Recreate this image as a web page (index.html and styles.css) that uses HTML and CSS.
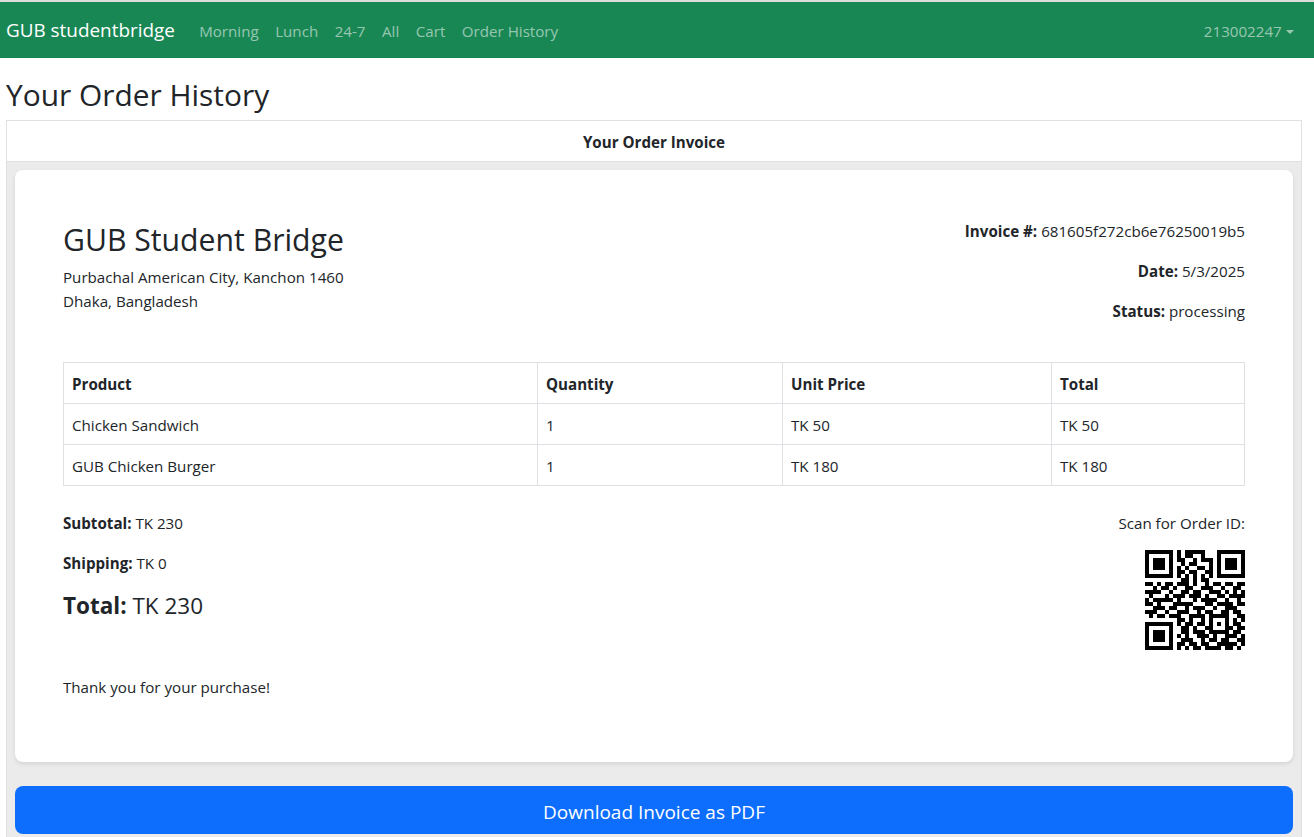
FILE: index.html
```html
<!DOCTYPE html>
<html>
    <head>
        <meta charset="utf-8">
        <title>Your Order History</title>
        <link rel="stylesheet" href="styles.css">
    </head>
    <body>
        <nav class="navbar">
            <a class="brand" href="#">GUB studentbridge</a>
            <a class="nav-link" href="#">Morning</a>
            <a class="nav-link" href="#">Lunch</a>
            <a class="nav-link" href="#">24-7</a>
            <a class="nav-link" href="#">All</a>
            <a class="nav-link" href="#">Cart</a>
            <a class="nav-link" href="#">Order History</a>
            <a class="nav-link user" href="#">213002247<span class="caret"></span></a>
        </nav>
        <main class="page">
            <h2 class="page-title">Your Order History</h2>
            <section class="card">
                <div class="card-header">Your Order Invoice</div>
                <div class="card-body">
                    <div class="invoice">
                        <div class="invoice-top">
                            <div>
                                <h1 class="shop-name">GUB Student Bridge</h1>
                                <p class="address">Purbachal American City, Kanchon 1460<br>Dhaka, Bangladesh</p>
                            </div>
                            <div class="invoice-meta">
                                <p><b>Invoice #:</b> 681605f272cb6e76250019b5</p>
                                <p><b>Date:</b> 5/3/2025</p>
                                <p><b>Status:</b> processing</p>
                            </div>
                        </div>
                        <table class="items">
                            <thead>
                                <tr><th class="col-product">Product</th><th class="col-qty">Quantity</th><th class="col-price">Unit Price</th><th>Total</th></tr>
                            </thead>
                            <tbody>
                                <tr><td>Chicken Sandwich</td><td>1</td><td>TK 50</td><td>TK 50</td></tr>
                                <tr><td>GUB Chicken Burger</td><td>1</td><td>TK 180</td><td>TK 180</td></tr>
                            </tbody>
                        </table>
                        <div class="summary">
                            <div>
                                <p><b>Subtotal:</b> TK 230</p>
                                <p><b>Shipping:</b> TK 0</p>
                                <h4 class="grand-total"><b>Total:</b> TK 230</h4>
                            </div>
                            <div class="qr-box">
                                <p>Scan for Order ID:</p>
                                <svg class="qr" viewBox="0 0 25 25" width="100" height="100" shape-rendering="crispEdges">
                                    <path stroke="#000" stroke-width="1" fill="none" d="M0 .5h7M8 .5h1M10 .5h5M18 .5h7
                                    M0 1.5h1M6 1.5h1M8 1.5h1M10 1.5h2M14 1.5h1M18 1.5h1M24 1.5h1
                                    M0 2.5h1M2 2.5h3M6 2.5h1M8 2.5h2M12 2.5h1M14 2.5h3M18 2.5h1M20 2.5h3M24 2.5h1
                                    M0 3.5h1M2 3.5h3M6 3.5h1M9 3.5h1M11 3.5h2M16 3.5h1M18 3.5h1M20 3.5h3M24 3.5h1
                                    M0 4.5h1M2 4.5h3M6 4.5h1M8 4.5h1M10 4.5h1M13 4.5h2M16 4.5h1M18 4.5h1M20 4.5h3M24 4.5h1
                                    M0 5.5h1M6 5.5h1M8 5.5h2M11 5.5h2M15 5.5h2M18 5.5h1M24 5.5h1
                                    M0 6.5h7M8 6.5h1M10 6.5h1M12 6.5h1M14 6.5h1M16 6.5h1M18 6.5h7
                                    M9 7.5h2M12 7.5h1M14 7.5h2
                                    M0 8.5h2M3 8.5h1M5 8.5h2M8 8.5h3M12 8.5h1M15 8.5h1M17 8.5h2M20 8.5h2M23 8.5h2
                                    M2 9.5h1M4 9.5h2M7 9.5h1M10 9.5h2M14 9.5h3M19 9.5h1M22 9.5h2
                                    M0 10.5h4M6 10.5h1M9 10.5h2M12 10.5h2M16 10.5h3M20 10.5h1M22 10.5h1M24 10.5h1
                                    M1 11.5h1M5 11.5h1M7 11.5h3M11 11.5h3M15 11.5h1M18 11.5h2M21 11.5h4
                                    M0 12.5h1M2 12.5h5M8 12.5h1M12 12.5h1M14 12.5h4M20 12.5h1M23 12.5h1
                                    M0 13.5h2M3 13.5h1M7 13.5h5M15 13.5h2M18 13.5h4M23 13.5h2
                                    M2 14.5h3M6 14.5h2M10 14.5h1M12 14.5h3M17 14.5h1M20 14.5h3
                                    M0 15.5h3M5 15.5h1M8 15.5h3M13 15.5h1M15 15.5h2M19 15.5h2M22 15.5h2
                                    M1 16.5h1M3 16.5h2M6 16.5h3M11 16.5h4M16 16.5h5M23 16.5h2
                                    M8 17.5h2M11 17.5h1M14 17.5h1M16 17.5h1M20 17.5h1M22 17.5h1M24 17.5h1
                                    M0 18.5h7M8 18.5h1M10 18.5h2M13 18.5h2M16 18.5h1M18 18.5h1M20 18.5h1M22 18.5h2
                                    M0 19.5h1M6 19.5h1M9 19.5h2M12 19.5h1M15 19.5h2M20 19.5h2M23 19.5h2
                                    M0 20.5h1M2 20.5h3M6 20.5h1M9 20.5h2M12 20.5h3M16 20.5h5M22 20.5h2
                                    M0 21.5h1M2 21.5h3M6 21.5h1M8 21.5h1M10 21.5h1M13 21.5h3M17 21.5h1M20 21.5h3M24 21.5h1
                                    M0 22.5h1M2 22.5h3M6 22.5h1M9 22.5h3M14 22.5h1M16 22.5h2M19 22.5h2M23 22.5h2
                                    M0 23.5h1M6 23.5h1M8 23.5h2M11 23.5h2M14 23.5h2M18 23.5h5M24 23.5h1
                                    M0 24.5h7M8 24.5h1M10 24.5h1M12 24.5h2M15 24.5h4M20 24.5h2M23 24.5h1"/>
                                </svg>
                            </div>
                        </div>
                        <p class="thanks">Thank you for your purchase!</p>
                    </div>
                    <button class="btn-download">Download Invoice as PDF</button>
                </div>
            </section>
        </main>
    </body>
</html>
```

FILE: styles.css
```css
html {color:#212529;}
body {margin:0;padding:0;background:#fff;font-family:"Open Sans","Noto Sans",sans-serif;font-size:15.15px;line-height:24px;}
p {margin:0 0 16px;}
b,th {font-weight:700;}

.navbar {display:flex;align-items:center;height:56px;padding:0 12px 0 6px;background:#198754;border-top:2px solid #dcdcdc;}
.brand {font-size:18.9px;color:#fff;text-decoration:none;margin-right:16px;}
.nav-link {padding:9px 8.25px 7px;color:rgba(255,255,255,.55);text-decoration:none;}
.user {margin-left:auto;}
.caret {display:inline-block;margin-left:4px;vertical-align:3px;border-top:4px solid;border-left:4px solid transparent;border-right:4px solid transparent;}

.page {padding:0 12px 0 6px;}
.page-title {margin:0;padding-top:18px;height:62px;box-sizing:border-box;font-size:29.9px;line-height:38px;font-weight:400;}

.card {border:1px solid #dfdfe4;}
.card-header {height:40px;line-height:42px;border-bottom:1px solid #dfdfe4;text-align:center;font-weight:700;}
.card-body {background:#ebebeb;padding:8px;}

.invoice {background:#fff;border-radius:8px;padding:49px 48px 48px;box-shadow:0 2px 4px rgba(0,0,0,.1);}
.invoice-top {display:flex;justify-content:space-between;height:143px;}
.shop-name {margin:2px 0 6px;font-size:30.2px;line-height:38px;font-weight:400;}
.address {margin:0;}
.invoice-meta {text-align:right;}

.items {width:100%;border-collapse:collapse;table-layout:fixed;}
.items th,.items td {border:1px solid #dfdfe4;padding:9px 8px 7px;height:24px;text-align:left;}
.col-product {width:457px;}
.col-qty {width:228px;}
.col-price {width:252px;}

.summary {display:flex;justify-content:space-between;margin-top:25px;height:164px;}
.grand-total {margin:2px 0 0;font-size:22.5px;line-height:29px;font-weight:400;}
.qr-box {text-align:right;}
.qr-box p {margin-bottom:15px;}
.qr {display:block;margin-left:auto;}
.thanks {margin:0;padding-bottom:15px;}

.btn-download {display:block;width:100%;height:48px;margin-top:24px;padding:4px 0 0;border:0;border-radius:8px;background:#0d6efd;color:#fff;font-family:inherit;font-size:19px;}
```
